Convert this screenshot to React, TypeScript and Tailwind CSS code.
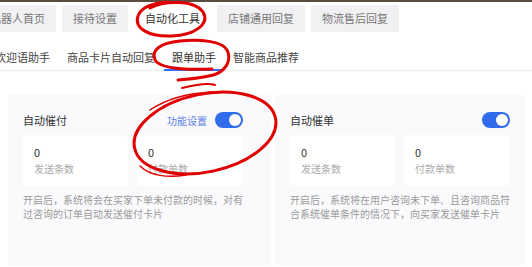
import React from 'react';

const mainTabs = [
  { label: '机器人首页', active: false },
  { label: '接待设置', active: false },
  { label: '自动化工具', active: true },
  { label: '店铺通用回复', active: false },
  { label: '物流售后回复', active: false },
];

const subTabs = [
  { label: '欢迎语助手', active: false },
  { label: '商品卡片自动回复', active: false },
  { label: '跟单助手', active: true },
  { label: '智能商品推荐', active: false },
];

function Toggle() {
  return (
    <div className="w-[28px] h-[16px] rounded-full bg-[#2f6bea] flex items-center justify-end px-[2px]">
      <div className="w-[12px] h-[12px] rounded-full bg-white" />
    </div>
  );
}

function StatBox({ value, label }: { value: string; label: string }) {
  return (
    <div className="w-[105px] h-[51px] bg-white rounded-[3px] pl-[11px] pt-[10px]">
      <div className="text-[11px] leading-[14px] text-[#333]">{value}</div>
      <div className="mt-[3px] text-[10px] leading-[14px] text-[#aaa]">{label}</div>
    </div>
  );
}

function Card({
  title,
  showSetting,
  stats,
  lines,
  className,
}: {
  title: string;
  showSetting?: boolean;
  stats: { value: string; label: string }[];
  lines: string[];
  className: string;
}) {
  return (
    <div className={`h-[172px] bg-[#fafafd] rounded-[4px] pl-[15px] pt-[18px] ${className}`}>
      <div className="w-[220px] h-[16px] flex items-center justify-between">
        <span className="text-[11px] text-[#333]">{title}</span>
        <div className="flex items-center gap-[8px]">
          {showSetting && <span className="text-[10px] text-[#5b7ee5]">功能设置</span>}
          <Toggle />
        </div>
      </div>
      <div className="mt-[7px] flex gap-[9px]">
        {stats.map((s) => (
          <StatBox key={s.label} value={s.value} label={s.label} />
        ))}
      </div>
      <div className="mt-[7px] text-[10px] leading-[14px] text-[#9a9a9a]">
        {lines.map((l) => (
          <div key={l} className="whitespace-nowrap">
            {l}
          </div>
        ))}
      </div>
    </div>
  );
}

export default function App() {
  return (
    <div className="relative w-[532px] h-[267px] overflow-hidden bg-white font-['Noto_Sans_CJK_SC',sans-serif]">
      <div className="h-[2px] bg-[#5b4d3e]" />

      {/* 顶部主标签 */}
      <div className="mt-[3px] ml-[-21px] flex gap-[6px]">
        {mainTabs.map((t) => (
          <div
            key={t.label}
            className={`h-[27px] px-[11px] flex items-center text-[11px] whitespace-nowrap ${
              t.active ? 'bg-white text-[#333]' : 'bg-[#f1f1f3] text-[#777]'
            }`}
          >
            {t.label}
          </div>
        ))}
      </div>

      {/* 子标签 */}
      <div className="mt-[13px] border-b border-[#ececec] flex ml-[-13px] gap-[1px]">
        {subTabs.map((t) => (
          <div
            key={t.label}
            className={`h-[26px] px-[8px] flex items-center text-[11px] whitespace-nowrap mb-[-1px] border-b-2 ${
              t.active ? 'border-[#3370ff] text-[#333]' : 'border-transparent text-[#444]'
            }`}
          >
            {t.label}
          </div>
        ))}
      </div>

      <div className="mt-[23px] ml-[8px] flex gap-[4px]">
        <Card
          className="w-[263px]"
          title="自动催付"
          showSetting
          stats={[
            { value: '0', label: '发送条数' },
            { value: '0', label: '付款单数' },
          ]}
          lines={['开启后，系统将会在买家下单未付款的时候，对有', '过咨询的订单自动发送催付卡片']}
        />
        <Card
          className="w-[250px]"
          title="自动催单"
          stats={[
            { value: '0', label: '发送条数' },
            { value: '0', label: '付款单数' },
          ]}
          lines={['开启后，系统将在用户咨询未下单、且咨询商品符', '合系统催单条件的情况下，向买家发送催单卡片']}
        />
      </div>

      {/* 红色手绘标注 */}
      <svg
        className="absolute inset-0 pointer-events-none"
        width="532"
        height="267"
        viewBox="0 0 532 267"
        fill="none"
        stroke="#e00000"
        strokeWidth="3"
        strokeLinecap="round"
        strokeLinejoin="round"
      >
        <path d="M150 8 C 165 0, 195 0, 203 12 C 210 24, 195 35, 172 36 C 148 37, 134 28, 138 16 C 141 8, 152 3, 168 2" />
        <path d="M212 69 C 185 70, 160 69, 155 60 C 151 50, 160 43, 180 41 C 200 39, 222 41, 227 50 C 232 60, 226 70, 216 74 C 205 78, 190 79, 178 80" />
        <path d="M182 88 C 198 84, 210 83, 215 85" strokeWidth="2" />
        <ellipse cx="205" cy="133" rx="72" ry="39" transform="rotate(-12 205 133)" />
        <path d="M150 110 C 168 98, 190 93, 212 92" strokeWidth="1.5" />
        <path d="M140 166 C 150 176, 168 178, 186 175" strokeWidth="1.5" />
      </svg>
    </div>
  );
}
